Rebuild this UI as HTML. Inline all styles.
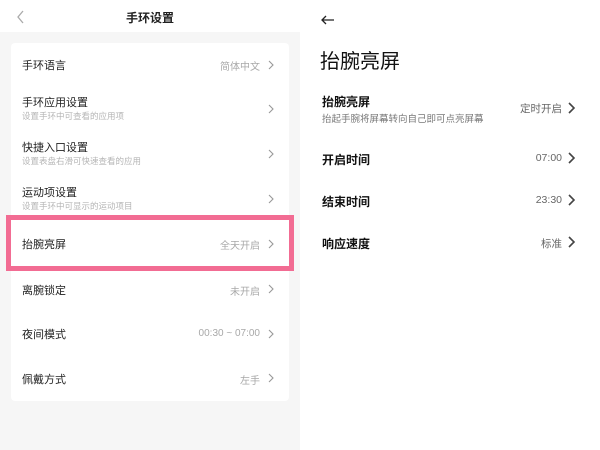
<!DOCTYPE html>
<html><head><meta charset="utf-8"><style>
*{margin:0;padding:0;box-sizing:border-box}
body{width:600px;height:450px;position:relative;background:#fff;font-family:"Liberation Sans","Noto Sans CJK SC",sans-serif;overflow:hidden}
.a{position:absolute;white-space:nowrap}
.l{position:absolute;left:0;top:0;width:300px;height:450px;background:#f6f6f6}
.hd{position:absolute;left:0;top:0;width:300px;height:32px;background:#fff}
.card{position:absolute;left:11px;top:43px;width:278px;height:358px;background:#fff;border-radius:4px}
.t{font-size:11px;color:#222;left:22px}
.s{font-size:8.5px;color:#b5b5b5;left:22px}
.v{font-size:10px;color:#a8a8a8;right:340px;text-align:right}
.rt{font-size:12px;color:#111;font-weight:bold;left:322px}
.rv{font-size:10.5px;color:#666;right:38px;text-align:right}
</style></head><body>
<div class="l"></div><div class="hd"></div>
<svg class="a" style="left:15px;top:9px" width="10" height="16"><path d="M8 2 L3 8 L8 14" stroke="#aaa" stroke-width="1.3" fill="none"/></svg>
<div class="a" style="left:126px;top:9px;font-size:12px;color:#222;font-weight:bold">手环设置</div>
<div class="card"></div>
<div class="a t" style="top:57px">手环语言</div><div class="a v" style="top:58px">简体中文</div>
<div class="a t" style="top:94px">手环应用设置</div><div class="a s" style="top:110px">设置手环中可查看的应用项</div>
<div class="a t" style="top:139px">快捷入口设置</div><div class="a s" style="top:155px">设置表盘右滑可快速查看的应用</div>
<div class="a t" style="top:184px">运动项设置</div><div class="a s" style="top:200px">设置手环中可显示的运动项目</div>
<div class="a" style="left:6px;top:215px;width:288px;height:56px;border:5px solid #f26c93"></div>
<div class="a t" style="top:236px">抬腕亮屏</div><div class="a v" style="top:237px">全天开启</div>
<div class="a t" style="top:282px">离腕锁定</div><div class="a v" style="top:283px">未开启</div>
<div class="a t" style="top:326px">夜间模式</div><div class="a v" style="top:328px">00:30 ~ 07:00</div>
<div class="a t" style="top:371px">佩戴方式</div><div class="a v" style="top:372px">左手</div>
<svg class="a" style="left:0;top:0" width="600" height="450">
<g stroke="#999" stroke-width="1.1" fill="none">
<path d="M269 61 L273 65 L269 69"/>
<path d="M269 105 L273 109 L269 113"/>
<path d="M269 150 L273 154 L269 158"/>
<path d="M269 195 L273 199 L269 203"/>
<path d="M269 240 L273 244 L269 248"/>
<path d="M269 285 L273 289 L269 293"/>
<path d="M269 330 L273 334 L269 338"/>
<path d="M269 374 L273 378 L269 382"/>
</g>
<g stroke="#444" stroke-width="1.6" fill="none">
<path d="M569 103 L574 108 L569 113"/>
<path d="M569 153 L574 158 L569 163"/>
<path d="M569 195 L574 200 L569 205"/>
<path d="M569 237 L574 242 L569 247"/>
</g>
</svg>
<svg class="a" style="left:320px;top:14px" width="16" height="12"><path d="M14 6 H2 M6 2 L2 6 L6 10" stroke="#222" stroke-width="1.3" fill="none"/></svg>
<div class="a" style="left:320px;top:45px;font-size:20px;color:#111">抬腕亮屏</div>
<div class="a rt" style="top:93px">抬腕亮屏</div><div class="a" style="left:322px;top:111px;font-size:9.5px;color:#777">抬起手腕将屏幕转向自己即可点亮屏幕</div>
<div class="a rv" style="top:101px">定时开启</div>
<div class="a rt" style="top:151px">开启时间</div><div class="a rv" style="top:152px">07:00</div>
<div class="a rt" style="top:193px">结束时间</div><div class="a rv" style="top:194px">23:30</div>
<div class="a rt" style="top:235px">响应速度</div><div class="a rv" style="top:236px">标准</div>
</body></html>
